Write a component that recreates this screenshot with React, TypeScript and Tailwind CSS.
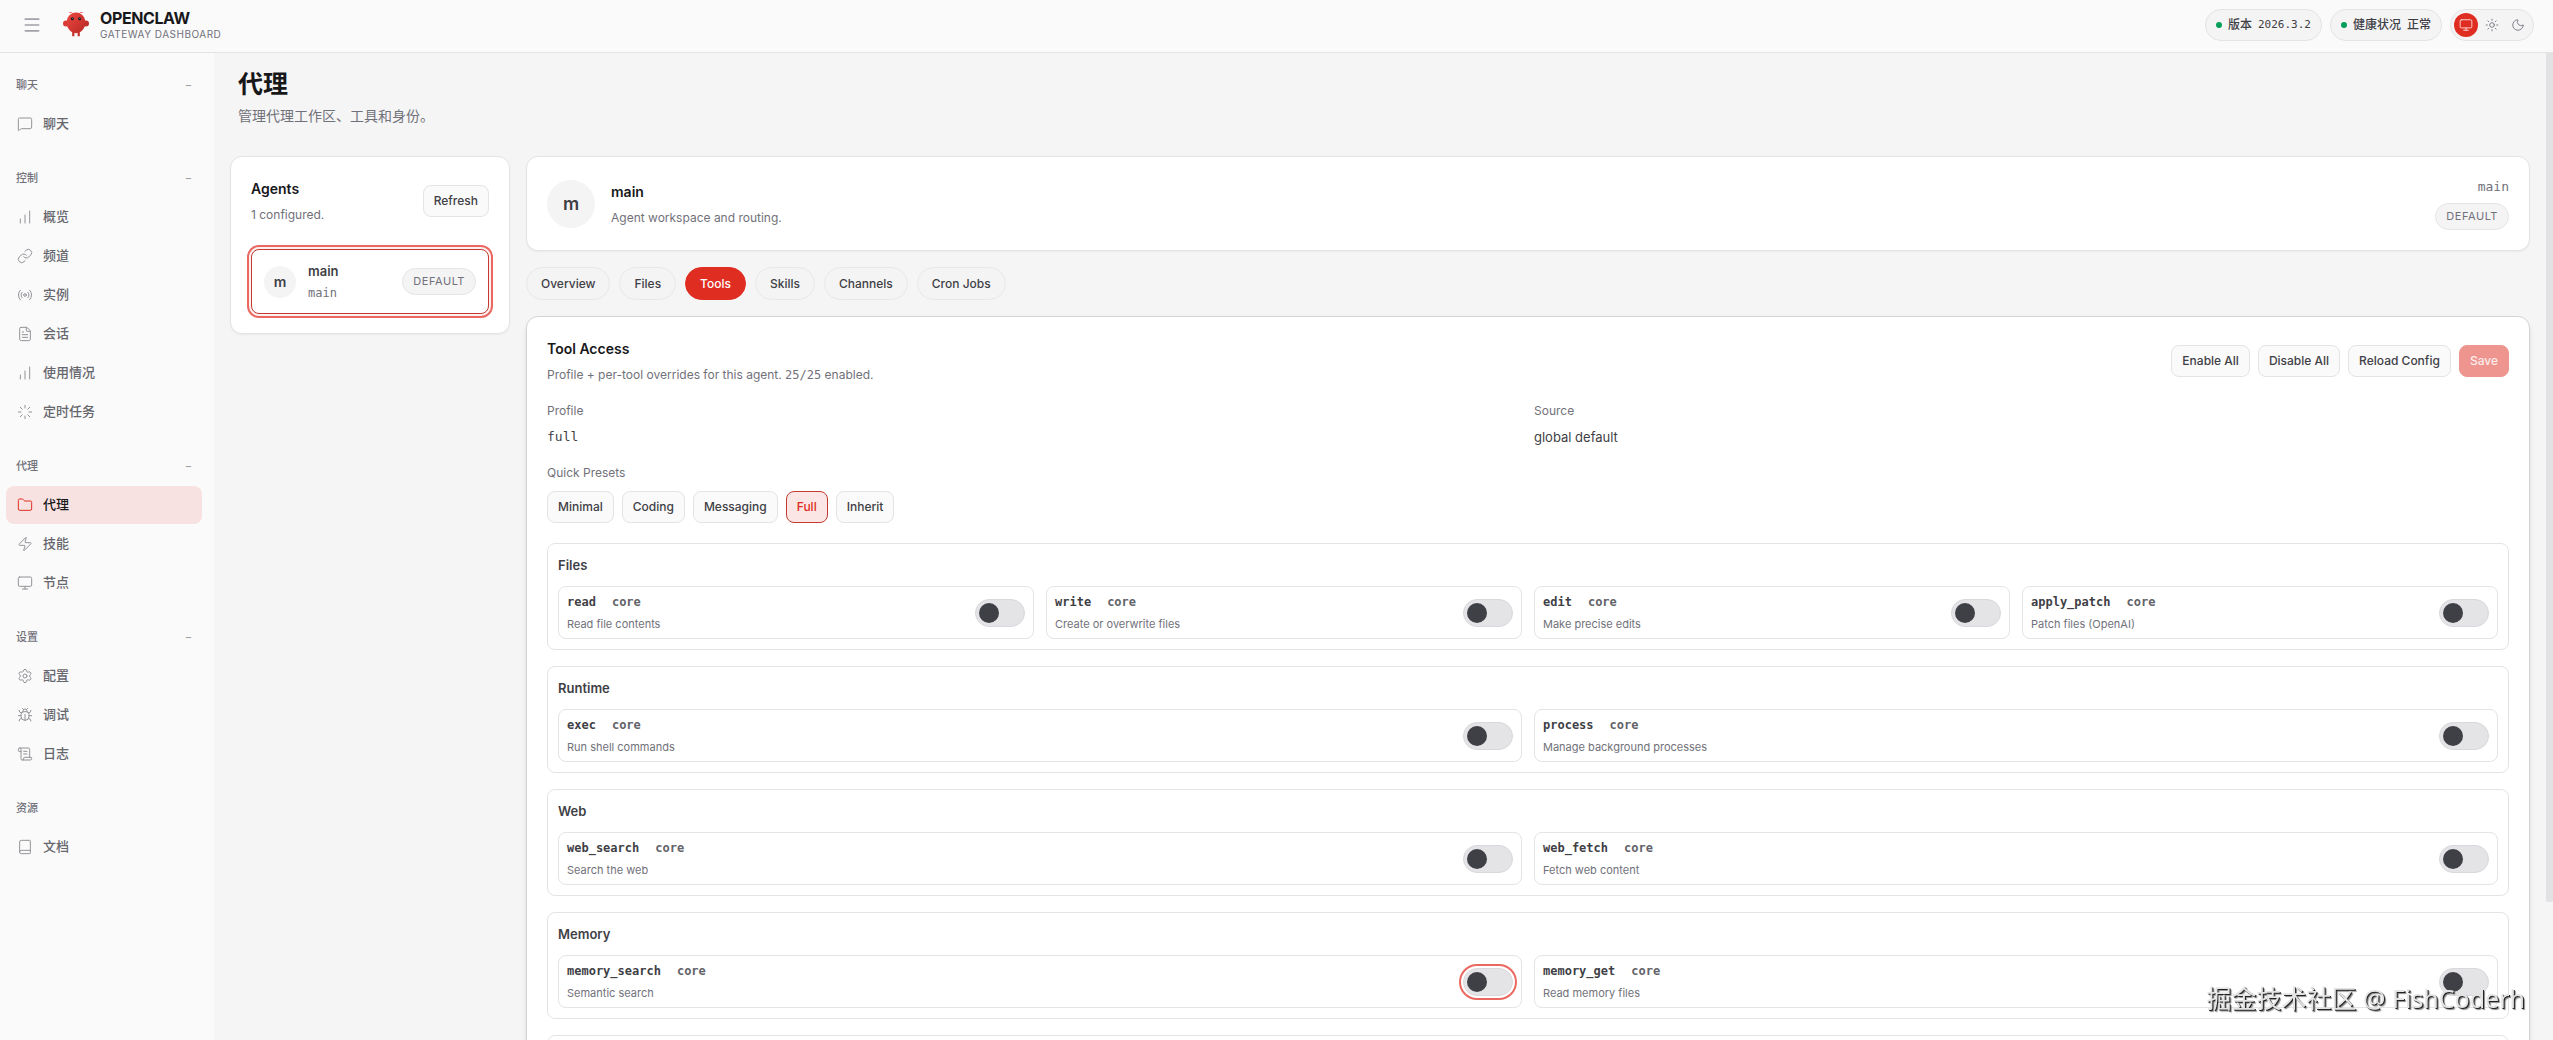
import { useState } from 'react'
import clsx from 'clsx'
import {
  Book,
  Bug,
  ChartNoAxesColumnIncreasing,
  FileText,
  Folder,
  Link,
  Loader,
  Menu,
  MessageSquare,
  Monitor,
  Moon,
  Radio,
  ScrollText,
  Settings,
  Sun,
  Zap,
} from 'lucide-react'
import type { LucideIcon } from 'lucide-react'

type NavItem = { label: string; icon: LucideIcon }
type NavGroup = { title: string; collapsible: boolean; items: NavItem[] }
type Tool = { name: string; description: string; focused?: boolean }
type ToolSection = { title: string; columns: 2 | 4; tools: Tool[] }

const NAV: NavGroup[] = [
  { title: '聊天', collapsible: true, items: [{ label: '聊天', icon: MessageSquare }] },
  {
    title: '控制',
    collapsible: true,
    items: [
      { label: '概览', icon: ChartNoAxesColumnIncreasing },
      { label: '频道', icon: Link },
      { label: '实例', icon: Radio },
      { label: '会话', icon: FileText },
      { label: '使用情况', icon: ChartNoAxesColumnIncreasing },
      { label: '定时任务', icon: Loader },
    ],
  },
  {
    title: '代理',
    collapsible: true,
    items: [
      { label: '代理', icon: Folder },
      { label: '技能', icon: Zap },
      { label: '节点', icon: Monitor },
    ],
  },
  {
    title: '设置',
    collapsible: true,
    items: [
      { label: '配置', icon: Settings },
      { label: '调试', icon: Bug },
      { label: '日志', icon: ScrollText },
    ],
  },
  { title: '资源', collapsible: false, items: [{ label: '文档', icon: Book }] },
]

const SECTIONS: ToolSection[] = [
  {
    title: 'Files',
    columns: 4,
    tools: [
      { name: 'read', description: 'Read file contents' },
      { name: 'write', description: 'Create or overwrite files' },
      { name: 'edit', description: 'Make precise edits' },
      { name: 'apply_patch', description: 'Patch files (OpenAI)' },
    ],
  },
  {
    title: 'Runtime',
    columns: 2,
    tools: [
      { name: 'exec', description: 'Run shell commands' },
      { name: 'process', description: 'Manage background processes' },
    ],
  },
  {
    title: 'Web',
    columns: 2,
    tools: [
      { name: 'web_search', description: 'Search the web' },
      { name: 'web_fetch', description: 'Fetch web content' },
    ],
  },
  {
    title: 'Memory',
    columns: 2,
    tools: [
      { name: 'memory_search', description: 'Semantic search', focused: true },
      { name: 'memory_get', description: 'Read memory files' },
    ],
  },
]

const TABS = ['Overview', 'Files', 'Tools', 'Skills', 'Channels', 'Cron Jobs']
const PRESETS = ['Minimal', 'Coding', 'Messaging', 'Full', 'Inherit']

const MONO = "font-['DejaVu_Sans_Mono','Noto_Sans_CJK_SC',monospace]"

function Logo() {
  return (
    <svg viewBox="0 0 28 28" className="h-7 w-7 shrink-0" aria-hidden="true">
      <defs>
        <linearGradient id="claw" x1="0" y1="0" x2="1" y2="1">
          <stop offset="0" stopColor="#ee4640" />
          <stop offset="1" stopColor="#b92a26" />
        </linearGradient>
      </defs>
      <path d="M11 2.6Q9.6.9 7.6 1.4M17 2.6Q18.4.9 20.4 1.4" stroke="#e8605a" strokeWidth="0.9" strokeLinecap="round" fill="none" />
      <circle cx="4" cy="12.4" r="3" fill="#d93a35" />
      <circle cx="24" cy="12.4" r="3" fill="#c2302b" />
      <path d="M10.2 20h2.2v5.2h-2.2zM15.6 20h2.2v5.2h-2.2z" fill="#c4322e" />
      <path
        d="M14 1.4C8 1.4 4.6 6.6 4.6 11.6c0 5.4 4 10.6 9.4 10.6s9.4-5.2 9.4-10.6C23.4 6.600 20 1.4 14 1.4Z"
        fill="url(#claw)"
      />
      <circle cx="10.4" cy="7.8" r="1.5" fill="#1d1416" />
      <circle cx="17.6" cy="7.8" r="1.5" fill="#1d1416" />
      <circle cx="10.7" cy="7.5" r="0.5" fill="#58b5a8" />
      <circle cx="17.9" cy="7.5" r="0.5" fill="#58b5a8" />
    </svg>
  )
}

function Button({ children, className }: { children: string; className?: string }) {
  return (
    <button
      type="button"
      className={clsx(
        'h-8 shrink-0 rounded-lg border px-[10px] text-xs font-medium',
        className ?? 'border-[#e4e4e7] bg-[#fafafa] text-[#3f3f46]',
      )}
    >
      {children}
    </button>
  )
}

function DefaultPill() {
  return (
    <span className="flex h-[27px] items-center rounded-full border border-[#e4e4e7] bg-[#f4f4f5] px-[10px] text-[11px] tracking-wider text-[#71717a]">
      DEFAULT
    </span>
  )
}

function Topbar() {
  const themes = [
    { name: 'System theme', icon: Monitor },
    { name: 'Light theme', icon: Sun },
    { name: 'Dark theme', icon: Moon },
  ]
  return (
    <header className="flex h-[53px] shrink-0 items-center justify-between border-b border-[#e4e4e7] bg-[#fafafa] pr-[19px] pb-[2px] pl-[22px]">
      <div className="flex items-center">
        <button type="button" aria-label="Toggle sidebar" className="mr-5 text-[#a1a1aa]">
          <Menu className="h-5 w-5" strokeWidth={2} />
        </button>
        <Logo />
        <div className="ml-[10px]">
          <p className="text-base leading-[18px] font-bold tracking-tight text-[#18181b]">OPENCLAW</p>
          <p className="text-[10px] leading-[14px] tracking-wider text-[#71717a]">GATEWAY DASHBOARD</p>
        </div>
      </div>
      <div className="flex items-center gap-2 text-xs text-[#3f3f46]">
        <div className="flex h-8 items-center gap-[6px] rounded-full border border-[#e4e4e7] bg-[#f4f4f5] px-[10px] font-medium">
          <span className="h-[6px] w-[6px] rounded-full bg-[#059e5b]" />
          <span>版本</span>
          <span className={clsx(MONO, 'text-[11px] font-normal')}>2026.3.2</span>
        </div>
        <div className="flex h-8 items-center gap-[6px] rounded-full border border-[#e4e4e7] bg-[#f4f4f5] px-[10px] font-medium">
          <span className="h-[6px] w-[6px] rounded-full bg-[#059e5b]" />
          <span>健康状况</span>
          <span>正常</span>
        </div>
        <div className="flex h-8 items-center gap-[2px] rounded-full border border-[#e4e4e7] bg-[#f4f4f5] px-[3px]">
          {themes.map(({ name, icon: Icon }, i) => (
            <button
              key={name}
              type="button"
              aria-label={name}
              className={clsx(
                'flex h-6 w-6 items-center justify-center rounded-full',
                i === 0 ? 'bg-[#e02d21] text-[#fde3e1]' : 'text-[#71717a]',
              )}
            >
              <Icon className="h-[14px] w-[14px]" strokeWidth={1.5} />
            </button>
          ))}
        </div>
      </div>
    </header>
  )
}

function Sidebar() {
  return (
    <nav className="flex w-[214px] shrink-0 flex-col gap-5 bg-[#fafafa] pt-[17px] pr-3 pl-[6px]">
      {NAV.map((group) => (
        <div key={group.title}>
          <button
            type="button"
            className="mb-[5px] flex h-[30px] w-full items-center justify-between px-[10px] text-[11px] font-medium text-[#71717a]"
          >
            <span>{group.title}</span>
            {group.collapsible && <span className="text-[#a1a1aa]">−</span>}
          </button>
          <div className="flex flex-col gap-px">
            {group.items.map(({ label, icon: Icon }) => {
              const active = group.title === '代理' && label === '代理'
              return (
                <a
                  key={label}
                  href="#"
                  className={clsx(
                    'flex h-[38px] items-center gap-[10px] rounded-lg px-[11px] text-[13px] font-medium',
                    active ? 'bg-[#f8e2e1] text-[#18181b]' : 'text-[#66666d]',
                  )}
                >
                  <Icon
                    className={clsx('h-4 w-4', active ? 'text-[#e02d21]' : 'text-[#929298]')}
                    strokeWidth={1.5}
                  />
                  {label}
                </a>
              )
            })}
          </div>
        </div>
      ))}
    </nav>
  )
}

function Toggle({ label, focused }: { label: string; focused?: boolean }) {
  const [on, setOn] = useState(false)
  return (
    <label
      className={clsx(
        'relative block h-7 w-[50px] shrink-0 cursor-pointer rounded-full border border-[#d9d9dd] bg-[#e4e4e7] p-[3px]',
        focused && 'shadow-[0_0_0_2px_#ffffff,0_0_0_4px_#ea6860]',
      )}
    >
      <input
        type="checkbox"
        aria-label={label}
        checked={on}
        onChange={(e) => setOn(e.target.checked)}
        className="peer absolute inset-0 h-full w-full cursor-pointer opacity-0"
      />
      <span className="block h-5 w-5 rounded-full bg-[#3f3f46] transition-transform peer-checked:translate-x-[22px]" />
    </label>
  )
}

function AgentList() {
  return (
    <section className="w-[280px] shrink-0 rounded-xl border border-[#e4e4e7] bg-white p-5 pb-[19px] shadow-xs">
      <div className="flex items-center justify-between">
        <div>
          <h2 className="text-sm leading-6 font-semibold text-[#18181b]">Agents</h2>
          <p className="mt-1 text-xs leading-5 text-[#71717a]">1 configured.</p>
        </div>
        <Button>Refresh</Button>
      </div>
      <button
        type="button"
        className="mt-6 flex h-[65px] w-full items-center gap-3 rounded-lg border border-[#c23a30] bg-white px-3 text-left shadow-[0_0_0_2px_#fdf0ef,0_0_0_4px_#ea6860]"
      >
        <span className="flex h-8 w-8 items-center justify-center rounded-full bg-[#f4f4f5] text-sm font-semibold text-[#3f3f46]">
          m
        </span>
        <span className="flex-1">
          <span className="block text-[13px] leading-5 font-semibold text-[#3f3f46]">main</span>
          <span className={clsx(MONO, 'mt-[2px] block text-xs leading-5 text-[#71717a]')}>main</span>
        </span>
        <DefaultPill />
      </button>
    </section>
  )
}

function AgentHeader() {
  return (
    <section className="flex items-center justify-between rounded-xl border border-[#e4e4e7] bg-white p-5 shadow-xs">
      <div className="flex items-center gap-4">
        <span className="flex h-12 w-12 items-center justify-center rounded-full bg-[#f4f4f5] text-lg font-semibold text-[#3f3f46]">
          m
        </span>
        <div>
          <h2 className="text-sm leading-6 font-semibold text-[#18181b]">main</h2>
          <p className="mt-1 text-xs leading-5 text-[#71717a]">Agent workspace and routing.</p>
        </div>
      </div>
      <div className="flex flex-col items-end gap-[6px]">
        <span className={clsx(MONO, 'text-[13px] leading-5 text-[#71717a]')}>main</span>
        <DefaultPill />
      </div>
    </section>
  )
}

function ToolCard({ tool }: { tool: Tool }) {
  return (
    <div className="flex items-center justify-between rounded-lg border border-[#e4e4e7] px-2 py-[7px]">
      <div>
        <p className={clsx(MONO, 'flex gap-4 text-xs leading-4 font-bold text-[#3f3f46]')}>
          <span>{tool.name}</span>
          <span className="text-[#63636a]">core</span>
        </p>
        <p className="mt-[7px] text-[11px] leading-[14px] text-[#71717a]">{tool.description}</p>
      </div>
      <Toggle label={tool.name} focused={tool.focused} />
    </div>
  )
}

function ToolAccess() {
  return (
    <section className="rounded-xl border border-[#d4d4d8] bg-white p-5 shadow-md">
      <div className="flex items-center justify-between">
        <div>
          <h2 className="text-sm leading-6 font-semibold text-[#18181b]">Tool Access</h2>
          <p className="mt-1 text-xs leading-5 text-[#71717a]">
            Profile + per-tool overrides for this agent. <span className={MONO}>25/25</span> enabled.
          </p>
        </div>
        <div className="flex gap-2">
          <Button>Enable All</Button>
          <Button>Disable All</Button>
          <Button>Reload Config</Button>
          <Button className="border-[#ee958f] bg-[#ee958f] text-[#fdeceb]">Save</Button>
        </div>
      </div>

      <dl className="mt-4 grid grid-cols-2 gap-3 leading-5">
        <div>
          <dt className="text-xs leading-5 text-[#71717a]">Profile</dt>
          <dd className={clsx(MONO, 'mt-[6px] text-[13px] text-[#3f3f46]')}>full</dd>
        </div>
        <div>
          <dt className="text-xs leading-5 text-[#71717a]">Source</dt>
          <dd className="mt-[6px] text-[13px] text-[#3f3f46]">global default</dd>
        </div>
      </dl>

      <p className="mt-4 text-xs leading-5 text-[#71717a]">Quick Presets</p>
      <div className="mt-2 flex gap-2">
        {PRESETS.map((preset) => (
          <Button
            key={preset}
            className={preset === 'Full' ? 'border-[#c23a30] bg-[#fbe6e5] text-[#e02d21]' : undefined}
          >
            {preset}
          </Button>
        ))}
      </div>

      <div className="mt-5 flex flex-col gap-4">
        {SECTIONS.map((section) => (
          <div key={section.title} className="rounded-lg border border-[#e4e4e7] p-[10px]">
            <h3 className="text-[13px] leading-[22px] font-semibold text-[#3f3f46]">{section.title}</h3>
            <div className={clsx('mt-[10px] grid gap-3', section.columns === 4 ? 'grid-cols-4' : 'grid-cols-2')}>
              {section.tools.map((tool) => (
                <ToolCard key={tool.name} tool={tool} />
              ))}
            </div>
          </div>
        ))}
        <div className="h-28 rounded-lg border border-[#e4e4e7]" />
      </div>
    </section>
  )
}

export default function App() {
  const [tab, setTab] = useState('Tools')

  return (
    <div className="flex h-screen flex-col overflow-hidden bg-[#f5f5f5] font-['Inter','Noto_Sans_CJK_SC',sans-serif]">
      <Topbar />
      <div className="flex min-h-0 flex-1">
        <Sidebar />
        <main className="min-w-0 flex-1 overflow-hidden px-4">
          <div className="px-2 pt-[13px] pb-[30px]">
            <h1 className="text-[25px] leading-9 font-bold text-[#18181b]">代理</h1>
            <p className="mt-1 text-sm leading-5 text-[#71717a]">管理代理工作区、工具和身份。</p>
          </div>
          <div className="flex items-start gap-4">
            <AgentList />
            <div className="flex min-w-0 flex-1 flex-col gap-4">
              <AgentHeader />
              <div className="flex gap-[9px]">
                {TABS.map((name) => (
                  <button
                    key={name}
                    type="button"
                    onClick={() => setTab(name)}
                    className={clsx(
                      'h-[33px] rounded-full border px-[14px] text-xs font-medium',
                      tab === name
                        ? 'border-[#e02d21] bg-[#e02d21] text-white'
                        : 'border-[#e8e8ea] bg-[#f4f4f5] text-[#3f3f46]',
                    )}
                  >
                    {name}
                  </button>
                ))}
              </div>
              <ToolAccess />
            </div>
          </div>
        </main>
        {/* scroll thumb */}
        <div className="w-[7px] shrink-0">
          <div className="h-[86%] rounded-b-xs bg-[#e2e2e5]" />
        </div>
      </div>
      <p className="pointer-events-none fixed right-7 bottom-6 font-['Noto_Sans','Noto_Sans_CJK_SC',sans-serif] text-[25px] leading-9 text-[#e4e4e4] [text-shadow:1px_1px_0_#222222,2px_2px_1px_#8a8a8a]">
        掘金技术社区 @ FishCoderh
      </p>
    </div>
  )
}
